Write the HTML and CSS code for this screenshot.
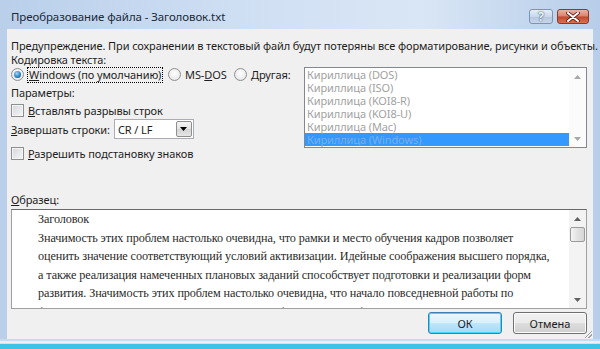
FILE: index.html
```html
<!DOCTYPE html>
<html lang="ru">
<head>
  <meta charset="utf-8">
  <title>Преобразование файла - Заголовок.txt</title>
  <link rel="stylesheet" href="styles.css">
</head>
<body>
  <div class="window">
    <div class="titlebar">
      <span class="title">Преобразование файла - Заголовок.txt</span>
      <div class="caption-btns">
        <span class="cap-help">?</span>
        <span class="cap-close">
          <svg width="14" height="10" viewBox="0 0 14 10">
            <path d="M2 1 L12 9 M12 1 L2 9" stroke="#5a1c10" stroke-width="3.6" stroke-linecap="round"/>
            <path d="M2 1 L12 9 M12 1 L2 9" stroke="#ffffff" stroke-width="2" stroke-linecap="round"/>
          </svg>
        </span>
      </div>
    </div>

    <div class="client">
      <div class="warning">Предупреждение. При сохранении в текстовый файл будут потеряны все форматирование, рисунки и объекты.</div>
      <div class="label">Кодировка текста:</div>

      <div class="enc">
        <div class="enc-left">
          <div class="radios">
            <label class="radio r-win"><span class="rb checked"></span><span class="focus-rect"><u>W</u>indows (по умолчанию)</span></label>
            <label class="radio r-dos"><span class="rb"></span><span>MS-<u>D</u>OS</span></label>
            <label class="radio"><span class="rb"></span><span><u>Д</u>ругая:</span></label>
          </div>
          <div class="label params">Параметры:</div>
          <label class="check"><span class="cb"></span><span><u>В</u>ставлять разрывы строк</span></label>
          <div class="combo-row">
            <span><u>З</u>авершать строки:</span>
            <div class="combo">
              <span class="combo-value">CR / LF</span>
              <span class="combo-drop">
                <svg width="7" height="4" viewBox="0 0 7 4"><path d="M0 0 H7 L3.5 4 Z" fill="#000"/></svg>
              </span>
            </div>
          </div>
          <label class="check check-last"><span class="cb"></span><span><u>Р</u>азрешить подстановку знаков</span></label>
        </div>

        <div class="listbox">
          <ul class="items">
            <li>Кириллица (DOS)</li>
            <li>Кириллица (ISO)</li>
            <li>Кириллица (KOI8-R)</li>
            <li>Кириллица (KOI8-U)</li>
            <li>Кириллица (Mac)</li>
            <li class="selected">Кириллица (Windows)</li>
          </ul>
          <div class="vscroll">
            <span class="arrow up"><svg width="7" height="4" viewBox="0 0 7 4"><path d="M0 4 H7 L3.5 0 Z" fill="#a8a8a8"/></svg></span>
            <span class="track"></span>
            <span class="arrow down"><svg width="7" height="4" viewBox="0 0 7 4"><path d="M0 0 H7 L3.5 4 Z" fill="#a8a8a8"/></svg></span>
          </div>
        </div>
      </div>

      <div class="label sample-label"><u>О</u>бразец:</div>
      <div class="preview">
        <div class="preview-text">
          <p>Заголовок</p>
          <p>Значимость этих проблем настолько очевидна, что рамки и место обучения кадров позволяет</p>
          <p>оценить значение соответствующий условий активизации. Идейные соображения высшего порядка,</p>
          <p>а также реализация намеченных плановых заданий способствует подготовки и реализации форм</p>
          <p>развития. Значимость этих проблем настолько очевидна, что начало повседневной работы по</p>
          <p>формированию позиции играет важную роль в формировании форм развития.</p>
        </div>
        <div class="vscroll">
          <span class="arrow up"><svg width="7" height="4" viewBox="0 0 7 4"><path d="M0 4 H7 L3.5 0 Z" fill="#606060"/></svg></span>
          <span class="thumb"></span>
          <span class="track"></span>
          <span class="arrow down"><svg width="7" height="4" viewBox="0 0 7 4"><path d="M0 0 H7 L3.5 4 Z" fill="#606060"/></svg></span>
        </div>
      </div>

      <div class="buttons">
        <button class="btn default">ОК</button>
        <button class="btn">Отмена</button>
      </div>
      <span class="grip"></span>
    </div>
    <div class="bottom-frame"></div>
  </div>
</body>
</html>
```

FILE: styles.css
```css
body {
  margin: 0;
  width: 600px;
  height: 349px;
  overflow: hidden;
  font-family: "Noto Sans", "DejaVu Sans", sans-serif;
  font-size: 11px;
  letter-spacing: -0.1px;
  color: #1e1e1e;
}
.window {
  height: 349px;
  display: flex;
  flex-direction: column;
  padding: 0 7px;
  box-sizing: border-box;
  background: linear-gradient(to right, #b9cfea, #cfdff3 40%, #d9e6f5 70%, #b7cde9);
}
.titlebar {
  height: 29px;
  position: relative;
  box-sizing: border-box;
  padding: 9px 0 0 4px;
  line-height: 16px;
}
.title {
  color: #1c2a3a;
  font-size: 11.5px;
}
.caption-btns {
  position: absolute;
  top: 9px;
  right: 4px;
  display: flex;
  gap: 4px;
}
.cap-help {
  width: 24px;
  height: 15px;
  box-sizing: border-box;
  border: 1px solid #7d93b3;
  border-radius: 3px;
  background: linear-gradient(#e6eef8, #cbd8ea 50%, #b4c6de 51%, #c7d6ea);
  color: #eef3f9;
  font-weight: bold;
  font-size: 12px;
  line-height: 13px;
  text-align: center;
  text-shadow: 0 0 2px #4a5e7a, 0 0 1px #4a5e7a;
}
.cap-close {
  width: 32px;
  height: 15px;
  box-sizing: border-box;
  border: 1px solid #8a3a2a;
  border-radius: 3px;
  background: linear-gradient(#eab3a6, #d8826c 48%, #c5452b 52%, #d6724f);
  display: flex;
  align-items: center;
  justify-content: center;
}
.client {
  position: relative;
  height: 310px;
  background: #f0f0f0;
  box-sizing: border-box;
  padding: 9px 6px 0 4px;
  line-height: 15px;
}
.warning {
  white-space: nowrap;
  height: 15px;
}
.label {
  height: 14px;
  line-height: 14px;
}
.enc {
  display: flex;
  justify-content: space-between;
}
.enc-left {
  display: flex;
  flex-direction: column;
}
.radios {
  display: flex;
  height: 15px;
}
.r-win {
  width: 157px;
}
.r-dos {
  width: 66px;
}
.radio, .check {
  display: flex;
  align-items: center;
  gap: 4px;
  height: 15px;
  white-space: nowrap;
}
.rb {
  flex: none;
  width: 13px;
  height: 13px;
  box-sizing: border-box;
  border-radius: 50%;
  border: 1px solid #8e8f8f;
  background: radial-gradient(circle at 50% 40%, #ffffff, #e0e0e0);
  position: relative;
}
.rb.checked::after {
  content: "";
  position: absolute;
  left: 2px;
  top: 2px;
  width: 7px;
  height: 7px;
  border-radius: 50%;
  background: radial-gradient(circle at 40% 35%, #9edbf8, #2a7bbf 60%, #1a4f8a);
}
.focus-rect {
  outline: 1px dotted #000;
  padding: 0 1px;
  line-height: 14px;
}
.params {
  margin-top: 3px;
  height: 15px;
  line-height: 15px;
}
.check {
  margin-top: 3px;
}
.cb {
  flex: none;
  width: 13px;
  height: 13px;
  box-sizing: border-box;
  border: 1px solid #8e8f8f;
  background: linear-gradient(135deg, #d4d7dc, #f7f7f7);
  box-shadow: inset 0 0 0 1px #f4f4f4;
}
.combo-row {
  display: flex;
  align-items: center;
  gap: 4px;
  height: 20px;
  margin-top: 1px;
}
.combo {
  width: 80px;
  height: 20px;
  box-sizing: border-box;
  border: 1px solid #abadb3;
  background: #fff;
  display: flex;
  align-items: center;
  justify-content: space-between;
  padding: 0 1px 0 3px;
}
.combo-drop {
  width: 16px;
  height: 16px;
  box-sizing: border-box;
  border: 1px solid #8f8f8f;
  border-radius: 2px;
  background: linear-gradient(#f5f5f5, #e4e4e4 50%, #d4d4d4 51%, #e6e6e6);
  display: flex;
  align-items: center;
  justify-content: center;
}
.check-last {
  margin-top: 7px;
}
.listbox {
  width: 283px;
  height: 81px;
  box-sizing: border-box;
  border: 1px solid #828790;
  background: #fff;
  display: flex;
}
.items {
  list-style: none;
  margin: 0;
  padding: 0;
  flex: 1;
  color: #a2a2a2;
  line-height: 13px;
}
.items li {
  height: 13px;
  padding-left: 2px;
}
.items li.selected {
  background: #3399ff;
  color: #78aee8;
}
.vscroll {
  width: 17px;
  display: flex;
  flex-direction: column;
  background: #f3f3f3;
}
.listbox .vscroll {
  background: #fbfbfb;
}
.arrow {
  height: 17px;
  display: flex;
  align-items: center;
  justify-content: center;
}
.track {
  flex: 1;
}
.thumb {
  height: 15px;
  margin: 0 1px;
  box-sizing: border-box;
  border: 1px solid #9b9b9b;
  border-radius: 2px;
  background: linear-gradient(to right, #f4f4f4, #e2e2e2 50%, #d6d6d6);
}
.sample-label {
  margin-top: 32px;
}
.preview {
  margin-top: 2px;
  height: 100px;
  box-sizing: border-box;
  border: 1px solid #a0a0a0;
  border-top-color: #696969;
  background: #fff;
  display: flex;
  overflow: hidden;
}
.preview-text {
  flex: 1;
  padding: 0 0 0 26px;
  font-family: "Liberation Serif", "Times New Roman", serif;
  font-size: 12.2px;
  letter-spacing: -0.1px;
  line-height: 18.5px;
  color: #2a2a2a;
  overflow: hidden;
  white-space: nowrap;
}
.preview-text p {
  margin: 0;
}
.buttons {
  margin-top: 3px;
  display: flex;
  justify-content: flex-end;
  gap: 11px;
}
.btn {
  width: 74px;
  height: 22px;
  font-family: inherit;
  font-size: 11px;
  color: #1e1e1e;
  border: 1px solid #707070;
  border-radius: 3px;
  background: linear-gradient(#f2f2f2, #ebebeb 48%, #dddddd 52%, #cfcfcf);
  box-shadow: inset 0 0 0 1px #fcfcfc;
  padding: 0;
}
.btn.default {
  border-color: #3c7fb1;
  box-shadow: inset 0 0 0 1px #48d5fb;
  background: linear-gradient(#eaf6fd, #d9f0fc 48%, #bee6fd 52%, #a7d9f5);
}
.grip {
  position: absolute;
  right: 1px;
  bottom: 1px;
  width: 8px;
  height: 8px;
  background: linear-gradient(135deg, transparent 55%, #a0a0a0 55%, #a0a0a0 62%, transparent 62%, transparent 75%, #a0a0a0 75%, #a0a0a0 82%, transparent 82%);
}
.bottom-frame {
  flex: 1;
  margin: 0 -7px;
  background: linear-gradient(#c8daf0 0, #c8daf0 2px, #f4ecf2 2px, #f4ecf2 4px, #d5e0ef 4px, #d5e0ef 5px, #3ec2e6 5px);
}
```
